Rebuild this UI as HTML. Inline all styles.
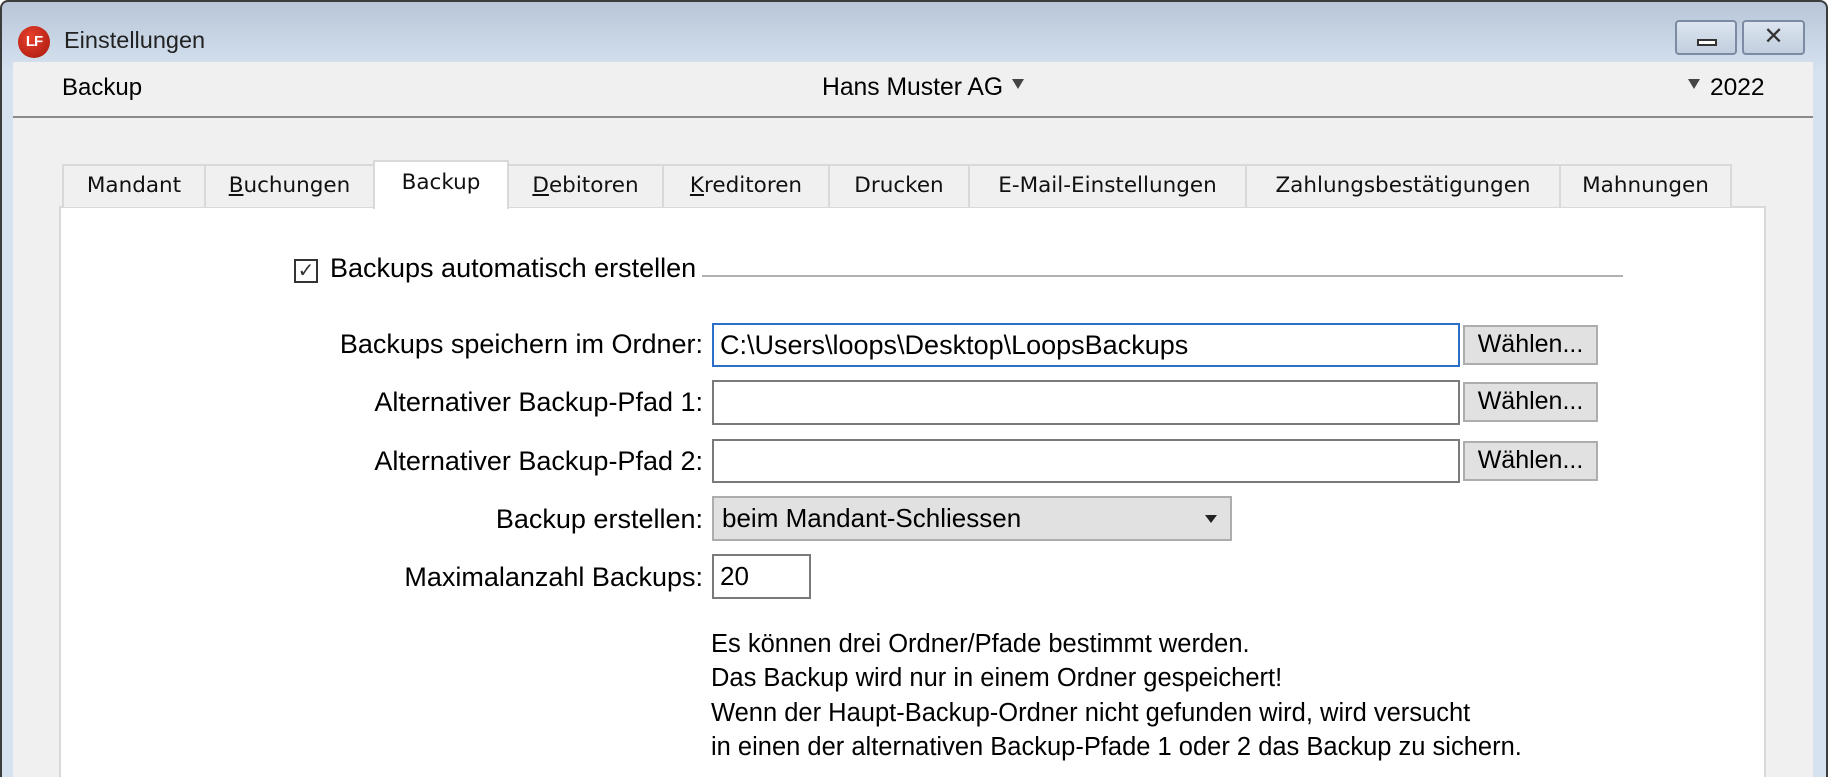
<!DOCTYPE html>
<html><head><meta charset="utf-8"><style>
*{margin:0;padding:0;box-sizing:border-box}
html,body{width:1828px;height:777px;overflow:hidden}
body{background:#fff;font-family:"Liberation Sans","DejaVu Sans",sans-serif;position:relative;color:#000}
.a{position:absolute}
.win{left:0;top:0;width:1828px;height:777px;background:linear-gradient(#b8c6d8,#d6e2f0 70px);border:2px solid #3c3c3c;border-bottom:none;border-radius:8px 8px 0 0}
.inner{left:13px;top:62px;width:1800px;height:715px;background:#f0f0f0}
.t{white-space:nowrap}
.tab{position:absolute;top:164px;height:43px;background:#f0f0f0;border:2px solid #d9d9d9;border-bottom:none;font-family:"DejaVu Sans",sans-serif;font-size:21.5px;text-align:center;line-height:40px;color:#111;white-space:nowrap}
.tab u{text-decoration:underline}
.lbl{position:absolute;right:1125px;font-size:27px;white-space:nowrap;text-align:right}
.fld{position:absolute;left:712px;background:#fff;border:2px solid #7a7a7a}
.btn{position:absolute;left:1463px;width:135px;height:40px;background:#e1e1e1;border:2px solid #adadad;font-size:25px;line-height:35px;text-align:center;white-space:nowrap}
.desc{position:absolute;left:711px;font-size:25.5px;white-space:nowrap}
</style></head><body>
<div class="a win"></div>
<div class="a" style="left:18px;top:26px;width:32px;height:32px;border-radius:50%;background:radial-gradient(circle at 40% 35%,#e8402c,#a5180e);color:#fff;font-weight:bold;font-size:15px;line-height:32px;text-align:center;letter-spacing:-1px">LF</div>
<div class="a t" style="left:64px;top:27px;font-size:23.5px;color:#222">Einstellungen</div>
<div class="a" style="left:1675px;top:20px;width:62px;height:35px;border:2px solid #7d8aa3;border-radius:4px;background:linear-gradient(#dce5f0,#c2cede)"><div class="a" style="left:20px;top:17px;width:20px;height:7px;border:2px solid #333;background:#fff"></div></div>
<div class="a" style="left:1742px;top:20px;width:63px;height:35px;border:2px solid #7d8aa3;border-radius:4px;background:linear-gradient(#dce5f0,#c2cede);text-align:center;font-size:24px;line-height:30px;color:#333;font-weight:bold">✕</div>
<div class="a inner"></div>
<div class="a" style="left:13px;top:116px;width:1800px;height:2px;background:#8a8a8a"></div>
<div class="a t" style="left:62px;top:74px;font-size:24px">Backup</div>
<div class="a t" style="left:822px;top:74px;font-size:24.7px">Hans Muster AG</div>
<div class="a" style="left:1012px;top:79px;border-left:6px solid transparent;border-right:6px solid transparent;border-top:10px solid #444"></div>
<div class="a" style="left:1688px;top:79px;border-left:6px solid transparent;border-right:6px solid transparent;border-top:10px solid #444"></div>
<div class="a t" style="left:1710px;top:74px;font-size:24.5px">2022</div>

<div class="a" style="left:59px;top:206px;width:1707px;height:571px;background:#fff;border:2px solid #d9d9d9;border-bottom:none"></div>
<div class="tab" style="left:62px;width:144px">Mandant</div>
<div class="tab" style="left:204px;width:171px"><u>B</u>uchungen</div>
<div class="tab" style="left:373px;top:160px;height:49px;width:136px;background:#fff;line-height:42px;z-index:2">Backup</div>
<div class="tab" style="left:507px;width:157px"><u>D</u>ebitoren</div>
<div class="tab" style="left:662px;width:168px"><u>K</u>reditoren</div>
<div class="tab" style="left:828px;width:142px">Drucken</div>
<div class="tab" style="left:968px;width:279px">E-Mail-Einstellungen</div>
<div class="tab" style="left:1245px;width:316px">Zahlungsbestätigungen</div>
<div class="tab" style="left:1559px;width:173px">Mahnungen</div>

<div class="a" style="left:294px;top:259px;width:24px;height:24px;border:2px solid #333;background:#fff;font-size:20px;line-height:20px;text-align:center;color:#333">✓</div>
<div class="a t" style="left:330px;top:253px;font-size:27px">Backups automatisch erstellen</div>
<div class="a" style="left:702px;top:275px;width:921px;height:2px;background:#b0b0b0"></div>

<div class="lbl" style="top:329px">Backups speichern im Ordner:</div>
<div class="fld" style="top:323px;width:748px;height:44px;border-color:#2a70c8;font-size:27px;line-height:40px;padding-left:6px;white-space:nowrap">C:\Users\loops\Desktop\LoopsBackups</div>
<div class="btn" style="top:325px">Wählen...</div>
<div class="lbl" style="top:387px">Alternativer Backup-Pfad 1:</div>
<div class="fld" style="top:380px;width:748px;height:45px"></div>
<div class="btn" style="top:382px">Wählen...</div>
<div class="lbl" style="top:446px">Alternativer Backup-Pfad 2:</div>
<div class="fld" style="top:439px;width:748px;height:44px"></div>
<div class="btn" style="top:441px">Wählen...</div>
<div class="lbl" style="top:504px">Backup erstellen:</div>
<div class="fld" style="top:496px;width:520px;height:45px;background:#e1e1e1;border-color:#adadad;font-size:26px;line-height:41px;padding-left:8px;white-space:nowrap">beim Mandant-Schliessen</div>
<div class="a" style="left:1205px;top:515px;border-left:6px solid transparent;border-right:6px solid transparent;border-top:8px solid #222"></div>
<div class="lbl" style="top:562px">Maximalanzahl Backups:</div>
<div class="fld" style="top:554px;width:99px;height:45px;font-size:26px;line-height:41px;padding-left:6px">20</div>

<div class="desc" style="top:630px">Es können drei Ordner/Pfade bestimmt werden.</div>
<div class="desc" style="top:664px">Das Backup wird nur in einem Ordner gespeichert!</div>
<div class="desc" style="top:699px">Wenn der Haupt-Backup-Ordner nicht gefunden wird, wird versucht</div>
<div class="desc" style="top:733px">in einen der alternativen Backup-Pfade 1 oder 2 das Backup zu sichern.</div>
</body></html>
